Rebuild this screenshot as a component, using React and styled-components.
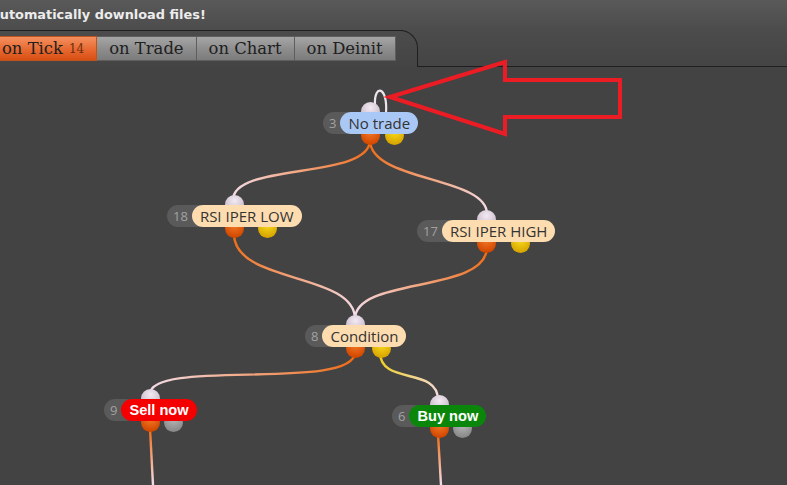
import styled, { createGlobalStyle } from 'styled-components'

const GlobalStyle = createGlobalStyle`
    html, body {
        margin: 0;
        padding: 0;
        background: #434343;
    }
`

const Page = styled.div`
    position: relative;
    width: 787px;
    height: 485px;
    overflow: hidden;
    background: #434343;
`

const Header = styled.div`
    height: 67px;
    display: flex;
    flex-direction: column;
    background: linear-gradient(#595959, #4c4c4c 45%, #444444);
`

const Notice = styled.div`
    height: 30px;
    display: flex;
    align-items: center;
    padding-bottom: 2px;
    box-sizing: border-box;
    margin-left: -9px;
    color: #ececec;
    font-family: 'DejaVu Sans', sans-serif;
    font-weight: bold;
    font-size: 12.9px;
    white-space: nowrap;
`

const TabStrip = styled.div`
    flex: 1;
    display: flex;
`

const Folder = styled.div`
    width: 418px;
    border-top: 1px solid #1f1f1f;
    border-right: 1px solid #1f1f1f;
    border-top-right-radius: 18px;
    box-sizing: border-box;
    padding-top: 5px;
`

const FolderRest = styled.div`
    flex: 1;
    border-bottom: 1px solid #1f1f1f;
`

const Tabs = styled.div`
    display: flex;
    margin-left: -10px;
`

const Tab = styled.div`
    height: 25px;
    display: flex;
    align-items: center;
    padding: 0 12px;
    box-sizing: border-box;
    border: 1px solid ${({ $active }) => ($active ? '#c0521d' : '#5e5e5e')};
    border-left-width: 0;
    background: ${({ $active }) =>
        $active
            ? 'linear-gradient(#f49060, #e86c34 50%, #d84e14)'
            : 'linear-gradient(#a6a6a6, #8e8e8e 50%, #7c7c7c)'};
    color: #202020;
    font-family: 'DejaVu Serif', serif;
    font-size: 16.4px;
    white-space: nowrap;
`

const Count = styled.sub`
    margin-left: 6px;
    font-size: 12px;
    color: #6e2e0c;
    vertical-align: -6px;
    line-height: 1;
`

const Canvas = styled.div`
    position: relative;
    height: 418px;
`

const Wires = styled.svg`
    position: absolute;
    left: 0;
    top: 0;
`

const Node = styled.div`
    position: absolute;
    display: flex;
    align-items: center;
    height: 22px;
`

const Badge = styled.span`
    height: 22px;
    border-radius: 11px;
    padding: 0 20px 0 6px;
    margin-right: -16px;
    background: #5a5a5a;
    color: #a2a2a2;
    font-family: 'Open Sans', sans-serif;
    font-size: 13px;
    line-height: 22px;
`

const Label = styled.span`
    position: relative;
    z-index: 2;
    height: 22px;
    border-radius: 11px;
    padding: 0 8px;
    background: ${({ $bg }) => $bg};
    color: ${({ $strong }) => ($strong ? '#ffffff' : '#333333')};
    font-family: ${({ $strong }) =>
        $strong ? "'Liberation Sans', Arial, sans-serif" : "'Open Sans', sans-serif"};
    font-weight: ${({ $strong }) => ($strong ? 'bold' : 'normal')};
    font-size: ${({ $strong }) => ($strong ? '14.6px' : '15px')};
    line-height: 22px;
    white-space: nowrap;
`

const portColors = {
    in: ['#f2eaf2', '#c9b9ca'],
    orange: ['#f47a28', '#d24800'],
    yellow: ['#fadc20', '#d8a600'],
    gray: ['#b8b8b8', '#8a8a8a'],
}

const Port = styled.span`
    position: absolute;
    z-index: 1;
    width: 19px;
    height: 19px;
    margin-left: -9.5px;
    border-radius: 50%;
    left: ${({ $at }) => $at}%;
    top: ${({ $kind }) => ($kind === 'in' ? '-10px' : '14px')};
    background: radial-gradient(
        circle at 50% 30%,
        ${({ $kind }) => portColors[$kind][0]},
        ${({ $kind }) => portColors[$kind][1]} 75%
    );
`

const Arrow = styled.svg`
    position: absolute;
    left: 0;
    top: 0;
    pointer-events: none;
`

const nodes = [
    { id: 3, label: 'No trade', x: 323, y: 112, bg: '#a9c8f6', second: 'yellow' },
    { id: 18, label: 'RSI IPER LOW', x: 167, y: 205, bg: '#fddcb0', second: 'yellow' },
    { id: 17, label: 'RSI IPER HIGH', x: 417, y: 220, bg: '#fddcb0', second: 'yellow' },
    { id: 8, label: 'Condition', x: 305, y: 325, bg: '#fddcb0', second: 'yellow' },
    { id: 9, label: 'Sell now', x: 104, y: 399, bg: '#f40000', strong: true, second: 'gray' },
    { id: 6, label: 'Buy now', x: 392, y: 405, bg: '#0a870a', strong: true, second: 'gray' },
]

const ORANGE = '#f06a12'
const PALE = '#f3dde8'
const YELLOW = '#f0cc10'

const wires = [
    { d: 'M370,140 C370,180 233,162 233,200', a: [370, 140], b: [233, 200], c: ORANGE },
    { d: 'M370,140 C370,182 487,176 487,214', a: [370, 140], b: [487, 214], c: ORANGE },
    { d: 'M234,234 C234,284 355,272 355,319', a: [234, 234], b: [355, 319], c: ORANGE },
    { d: 'M487,247 C487,294 355,276 355,319', a: [487, 247], b: [355, 319], c: ORANGE },
    { d: 'M355,352 C355,392 150,358 150,394', a: [355, 352], b: [150, 394], c: ORANGE },
    { d: 'M380,352 C380,386 438,366 438,400', a: [380, 352], b: [438, 400], c: YELLOW },
    { d: 'M150,428 L153,485', a: [150, 428], b: [153, 485], c: ORANGE },
    { d: 'M438,434 L441,485', a: [438, 434], b: [441, 485], c: ORANGE },
]

export default function App() {
    return (
        <Page>
            <GlobalStyle />
            <Header>
                <Notice>automatically download files!</Notice>
                <TabStrip>
                    <Folder>
                        <Tabs>
                            <Tab $active>
                                on Tick<Count>14</Count>
                            </Tab>
                            <Tab>on Trade</Tab>
                            <Tab>on Chart</Tab>
                            <Tab>on Deinit</Tab>
                        </Tabs>
                    </Folder>
                    <FolderRest />
                </TabStrip>
            </Header>
            <Canvas>
                <Wires width="787" height="418" viewBox="0 67 787 418">
                    <defs>
                        {wires.map((w, i) => (
                            <linearGradient
                                key={i}
                                id={`wire${i}`}
                                gradientUnits="userSpaceOnUse"
                                x1={w.a[0]}
                                y1={w.a[1]}
                                x2={w.b[0]}
                                y2={w.b[1]}
                            >
                                <stop offset="0" stopColor={w.c} />
                                <stop offset="1" stopColor={PALE} />
                            </linearGradient>
                        ))}
                    </defs>
                    {wires.map((w, i) => (
                        <path key={i} d={w.d} fill="none" stroke={`url(#wire${i})`} strokeWidth="2.4" />
                    ))}
                    {/* self loop on the first node */}
                    <path d="M375,104 C374,84 388,86 386,113" fill="none" stroke="#eee4ee" strokeWidth="2.2" />
                </Wires>
                {nodes.map((n) => (
                    <Node key={n.id} style={{ left: n.x, top: n.y - 67 }}>
                        <Port $kind="in" $at={50} />
                        <Port $kind="orange" $at={50} />
                        <Port $kind={n.second} $at={75} />
                        <Badge>{n.id}</Badge>
                        <Label $bg={n.bg} $strong={n.strong}>
                            {n.label}
                        </Label>
                    </Node>
                ))}
            </Canvas>
            <Arrow width="787" height="485">
                <polygon
                    points="390,97 505,62 505,80 620,80 620,117 505,117 505,134"
                    fill="none"
                    stroke="#ec1c24"
                    strokeWidth="4"
                    strokeLinejoin="miter"
                />
            </Arrow>
        </Page>
    )
}
